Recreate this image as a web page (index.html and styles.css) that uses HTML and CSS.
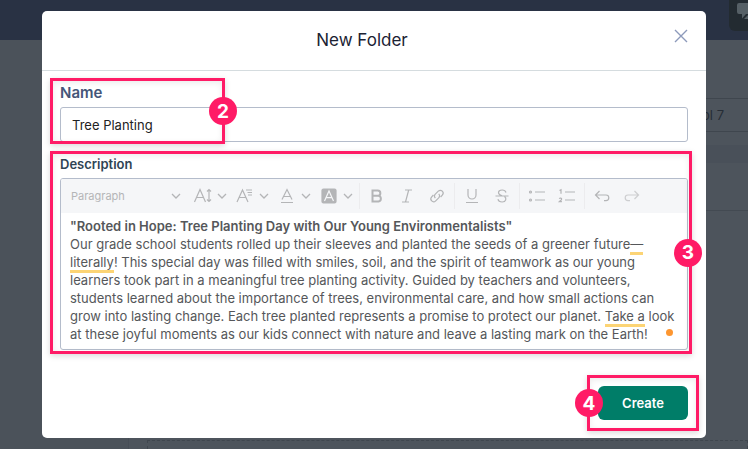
FILE: index.html
```html
<!DOCTYPE html>
<html lang="en">
<head>
    <meta charset="UTF-8">
    <meta name="viewport" content="width=device-width, initial-scale=1.0">
    <title>New Folder</title>
    <link rel="stylesheet" href="styles.css">
</head>
<body>
    <!-- Page behind the dialog -->
    <div class="page">
        <header class="topbar">
            <div class="chat">
                <svg width="22" height="22" viewBox="0 0 22 22" fill="#566066"><path d="M2 0h14a2 2 0 0 1 2 2v7a2 2 0 0 1-2 2H9l-4 4.500V11H2a2 2 0 0 1-2-2V2a2 2 0 0 1 2-2zM7 16l4-4h9v7l-3-3z"/></svg>
            </div>
        </header>
        <div class="main">
            <div class="sidebar"></div>
            <div class="content">
                <div class="crumbs">School 7</div>
                <div class="band"></div>
                <div class="panel"></div>
                <div class="dropzone"></div>
            </div>
        </div>
    </div>

    <div class="overlay">
        <form class="modal" role="dialog" aria-labelledby="title">
            <div class="modal-header">
                <h1 id="title">New Folder</h1>
                <button type="button" class="close" aria-label="Close">
                    <svg width="14" height="14" viewBox="0 0 14 14" fill="none" stroke="#8d9abb" stroke-width="1.4"><path d="M1 1l12 12M13 1L1 13"/></svg>
                </button>
            </div>

            <div class="modal-body">
                <div class="field">
                    <label class="name-label" for="name">Name</label>
                    <input type="text" id="name" value="Tree Planting">
                    <div class="mark mark-name"><span class="step">2</span></div>
                </div>

                <div class="field">
                    <span class="desc-label" id="descLabel">Description</span>
                    <div class="editor">
                        <div class="toolbar">
                            <button type="button" class="tool paragraph">Paragraph
                                <svg class="caret" viewBox="0 0 10 6"><path d="M1 1l4 4 4-4"/></svg>
                            </button>
                            <button type="button" class="tool wide" aria-label="Font size">
                                <svg class="icon" viewBox="0 0 20 20"><path d="M1.500 16L7 3.500 12.500 16M3.500 11.500h7M16 3.500v12M14 5.500l2-2 2 2M14 13.500l2 2 2-2"/></svg>
                                <svg class="caret" viewBox="0 0 10 6"><path d="M1 1l4 4 4-4"/></svg>
                            </button>
                            <button type="button" class="tool wide" aria-label="Font family">
                                <svg class="icon" viewBox="0 0 20 20"><path d="M2 16L7.500 4 13 16M4 11.500h7M11 4h6M12.500 6.500H17M13 9h4"/></svg>
                                <svg class="caret" viewBox="0 0 10 6"><path d="M1 1l4 4 4-4"/></svg>
                            </button>
                            <button type="button" class="tool wide" aria-label="Font color">
                                <svg class="icon" viewBox="0 0 20 20"><path d="M5 13.500L10 3.500l5 10M6.700 10.500h6.600M4 16.500h12"/></svg>
                                <svg class="caret" viewBox="0 0 10 6"><path d="M1 1l4 4 4-4"/></svg>
                            </button>
                            <button type="button" class="tool wide" aria-label="Background color">
                                <svg class="icon" viewBox="0 0 20 20"><rect x="3" y="3" width="14" height="14" rx="1.500" fill="#b4b5b7"/><path d="M5.500 15L10 5l4.500 10M7.200 11.700h5.600" stroke="#f5f6f8"/></svg>
                                <svg class="caret" viewBox="0 0 10 6"><path d="M1 1l4 4 4-4"/></svg>
                            </button>
                            <span class="divider"></span>
                            <button type="button" class="tool" aria-label="Bold">
                                <svg class="icon" viewBox="0 0 20 20"><path d="M5.500 4.500h5.200a2.600 2.600 0 0 1 0 5.300H5.500zM5.500 9.800h6a2.900 2.900 0 0 1 0 5.700h-6z" stroke-width="2"/></svg>
                            </button>
                            <button type="button" class="tool" aria-label="Italic">
                                <svg class="icon" viewBox="0 0 20 20"><path d="M8 4h7M5 16h7M11.700 4l-3.200 12"/></svg>
                            </button>
                            <button type="button" class="tool" aria-label="Link">
                                <svg class="icon" viewBox="0 0 20 20"><path d="M8.300 12.200c-1.300-1.300-1.100-2.900 0-4l3-3c1.200-1.200 2.900-1.200 4-.1s1.100 2.800 0 4L13.600 11M11.700 7.800c1.300 1.300 1.100 2.900 0 4l-3 3c-1.200 1.200-2.900 1.200-4 .1s-1.100-2.800 0-4L6.400 9"/></svg>
                            </button>
                            <span class="divider"></span>
                            <button type="button" class="tool" aria-label="Underline">
                                <svg class="icon" viewBox="0 0 20 20"><path d="M6 3v6a4 4 0 0 0 8 0V3M4 16.500h12"/></svg>
                            </button>
                            <button type="button" class="tool" aria-label="Strikethrough">
                                <svg class="icon" viewBox="0 0 20 20"><path d="M14 6.500C13.600 5 12.200 4 10.200 4 8 4 6.500 5 6.500 6.700c0 1.500 1.200 2.300 3.500 3.100M3.500 10h13M12.500 10.500c2.400 1.700 1.600 5.500-2.300 5.500-2.300 0-3.900-1-4.200-2.800"/></svg>
                            </button>
                            <span class="divider"></span>
                            <button type="button" class="tool" aria-label="Bulleted list">
                                <svg class="icon" viewBox="0 0 20 20"><path d="M8 6h10M8 14h10"/><circle cx="3.500" cy="6" r="1"/><circle cx="3.500" cy="14" r="1"/></svg>
                            </button>
                            <button type="button" class="tool" aria-label="Numbered list">
                                <svg class="icon" viewBox="0 0 20 20"><path d="M8 6h10M8 14h10M2.500 4.500L4 3.700v4M2.300 12.800c.5-1.100 2.500-.9 2.300.4-.1.900-1.400 1.500-2.300 2.500h2.600"/></svg>
                            </button>
                            <span class="divider"></span>
                            <button type="button" class="tool" aria-label="Undo">
                                <svg class="icon" viewBox="0 0 20 20"><path d="M7.500 5L3.500 9l4 4M3.500 9h10.500a2.800 2.800 0 0 1 0 5.600h-2"/></svg>
                            </button>
                            <button type="button" class="tool disabled" aria-label="Redo">
                                <svg class="icon" viewBox="0 0 20 20"><path d="M12.500 5l4 4-4 4M16.500 9H6a2.800 2.800 0 0 0 0 5.600h2"/></svg>
                            </button>
                        </div>
                        <div class="editable" contenteditable="true" spellcheck="false" role="textbox" aria-labelledby="descLabel"><strong>"Rooted in Hope: Tree Planting Day with Our Young Environmentalists"</strong><br>Our grade school students rolled up their sleeves and planted the seeds of a greener future<span class="hint">—</span><br><span class="hint">literally</span>! This special day was filled with smiles, soil, and the spirit of teamwork as our young<br>learners took part in a meaningful tree planting activity. Guided by teachers and volunteers,<br>students learned about the importance of trees, environmental care, and how small actions can<br>grow into lasting change. Each tree planted represents a promise to protect our planet. <span class="hint">Take a</span> look<br>at these joyful moments as our kids connect with nature and leave a lasting mark on the Earth!</div>
                        <span class="status-dot"></span>
                    </div>
                    <div class="mark mark-desc"><span class="step">3</span></div>
                </div>
            </div>

            <div class="modal-footer">
                <div class="action">
                    <button type="submit" class="create">Create</button>
                    <div class="mark mark-create"><span class="step">4</span></div>
                </div>
            </div>
        </form>
    </div>
</body>
</html>
```
FILE: styles.css
```css
* {
    box-sizing: border-box;
}

body {
    margin: 0;
    font-family: 'Inter', sans-serif;
    font-size: 13px;
    color: #222;
    overflow: hidden;
}

button, input {
    font-family: inherit;
}

/* Page behind the dialog */
.page {
    height: 100vh;
    display: flex;
    flex-direction: column;
    background-color: #4d545c;
}

.topbar {
    height: 40px;
    flex-shrink: 0;
    display: flex;
    justify-content: flex-end;
    background-color: #293244;
}

.chat {
    width: 19px;
    height: 31px;
    padding: 3px 0 0 8px;
    overflow: hidden;
    border-radius: 0 0 0 6px;
    background-color: #232b31;
}

.main {
    flex: 1;
    display: flex;
}

.sidebar {
    width: 129px;
    background-color: #4b525a;
    border-right: 1px solid #464d56;
}

.content {
    flex: 1;
    display: flex;
    flex-direction: column;
    padding-top: 58px;
}

.crumbs {
    padding: 0 24px;
    line-height: 32px;
    text-align: right;
    color: #262d36;
    border-top: 1px solid #3f464e;
    border-bottom: 1px solid #3f464e;
}

.band {
    height: 18px;
    margin-top: 13px;
    background-color: #495059;
}

.panel {
    flex: 1;
    margin-top: 47px;
    border-top: 1px solid #434a52;
}

.dropzone {
    height: 9px;
    margin-left: 18px;
    border: 1px dashed #3f464e;
    border-bottom: 0;
}

/* Dialog */
.overlay {
    position: fixed;
    inset: 0;
    padding: 11px 42px;
}

.modal {
    border-radius: 5px;
    background-color: #fff;
}

.modal-header {
    display: flex;
    align-items: center;
    padding: 14px 18px 15px;
    border-bottom: 1px solid #d5dcdf;
}

h1 {
    flex: 1;
    margin: 0;
    font-size: 17px;
    line-height: 30px;
    font-weight: 400;
    text-align: center;
    color: #1b2233;
}

.close {
    display: flex;
    margin: 0 0 8px 10px;
    padding: 0;
    border: 0;
    background: none;
    cursor: pointer;
}

.modal-body {
    display: flex;
    flex-direction: column;
    gap: 12px;
    padding: 12px 18px 0;
}

.field {
    position: relative;
    display: flex;
    flex-direction: column;
}

.name-label {
    margin-bottom: 4px;
    font-size: 15px;
    line-height: 20px;
    font-weight: 600;
    color: #455679;
}

.field input {
    width: 100%;
    height: 35px;
    padding: 0 11px;
    border: 1px solid #b4bccb;
    border-radius: 3px;
    font-size: 13px;
    color: #222;
}

.desc-label {
    margin-bottom: 4px;
    font-size: 13px;
    line-height: 20px;
    font-weight: 600;
    color: #2f4454;
}

/* Editor */
.editor {
    position: relative;
    border: 1px solid #b4bccb;
    border-radius: 3px;
    overflow: hidden;
}

.toolbar {
    display: flex;
    align-items: center;
    height: 34px;
    background-color: #f5f6f8;
}

.tool {
    display: flex;
    align-items: center;
    justify-content: center;
    width: 30px;
    height: 28px;
    padding: 0;
    border: 0;
    background: none;
    color: #b4b5b7;
}

.tool.wide {
    width: 42px;
    gap: 4px;
}

.tool.paragraph {
    justify-content: space-between;
    width: 128px;
    padding: 0 8px 0 10px;
    font-size: 11px;
}

.tool.disabled {
    opacity: 0.6;
}

.icon {
    width: 20px;
    height: 20px;
    fill: none;
    stroke: currentColor;
    stroke-width: 1.2;
}

.caret {
    width: 10px;
    height: 6px;
    fill: none;
    stroke: currentColor;
    stroke-width: 1.3;
}

.divider {
    width: 1px;
    height: 26px;
    margin: 0 2px;
    background-color: #ececee;
}

.editable {
    padding: 4px 9px 6px;
    line-height: 18px;
    white-space: pre-wrap;
    color: #55575a;
    outline: none;
}

.editable strong {
    font-weight: 600;
}

.hint {
    border-bottom: 3px solid #fcd475;
}

.status-dot {
    position: absolute;
    right: 14px;
    bottom: 13px;
    width: 7px;
    height: 7px;
    border-radius: 50%;
    background-color: #fd9630;
}

/* Footer */
.modal-footer {
    display: flex;
    justify-content: flex-end;
    padding: 36px 18px 18px;
}

.action {
    position: relative;
}

.create {
    display: block;
    width: 90px;
    height: 34px;
    border: 0;
    border-radius: 6px;
    background-color: #007d68;
    color: #fff;
    font-size: 13px;
    font-weight: 600;
    cursor: pointer;
}

/* Numbered callouts */
.mark {
    position: absolute;
    border: 3px solid #ff1b66;
    box-shadow: 0 2px 6px rgba(0, 0, 0, 0.15), inset 0 2px 6px rgba(0, 0, 0, 0.08);
    pointer-events: none;
}

.step {
    position: absolute;
    top: calc(50% - 14px);
    display: flex;
    align-items: center;
    justify-content: center;
    width: 28px;
    height: 28px;
    border-radius: 50%;
    background-color: #ff1b66;
    color: #fff;
    font-size: 19px;
    font-weight: 700;
}

.mark-name {
    top: -5px;
    bottom: -2px;
    left: -10px;
    width: 175px;
}

.mark-desc {
    top: -3px;
    right: -4px;
    bottom: -4px;
    left: -10px;
}

.mark-create {
    top: -11px;
    right: -11px;
    bottom: -11px;
    left: -11px;
}

.mark-name .step {
    right: -15px;
}

.mark-desc .step {
    right: -13px;
}

.mark-create .step {
    left: -15px;
}
```
